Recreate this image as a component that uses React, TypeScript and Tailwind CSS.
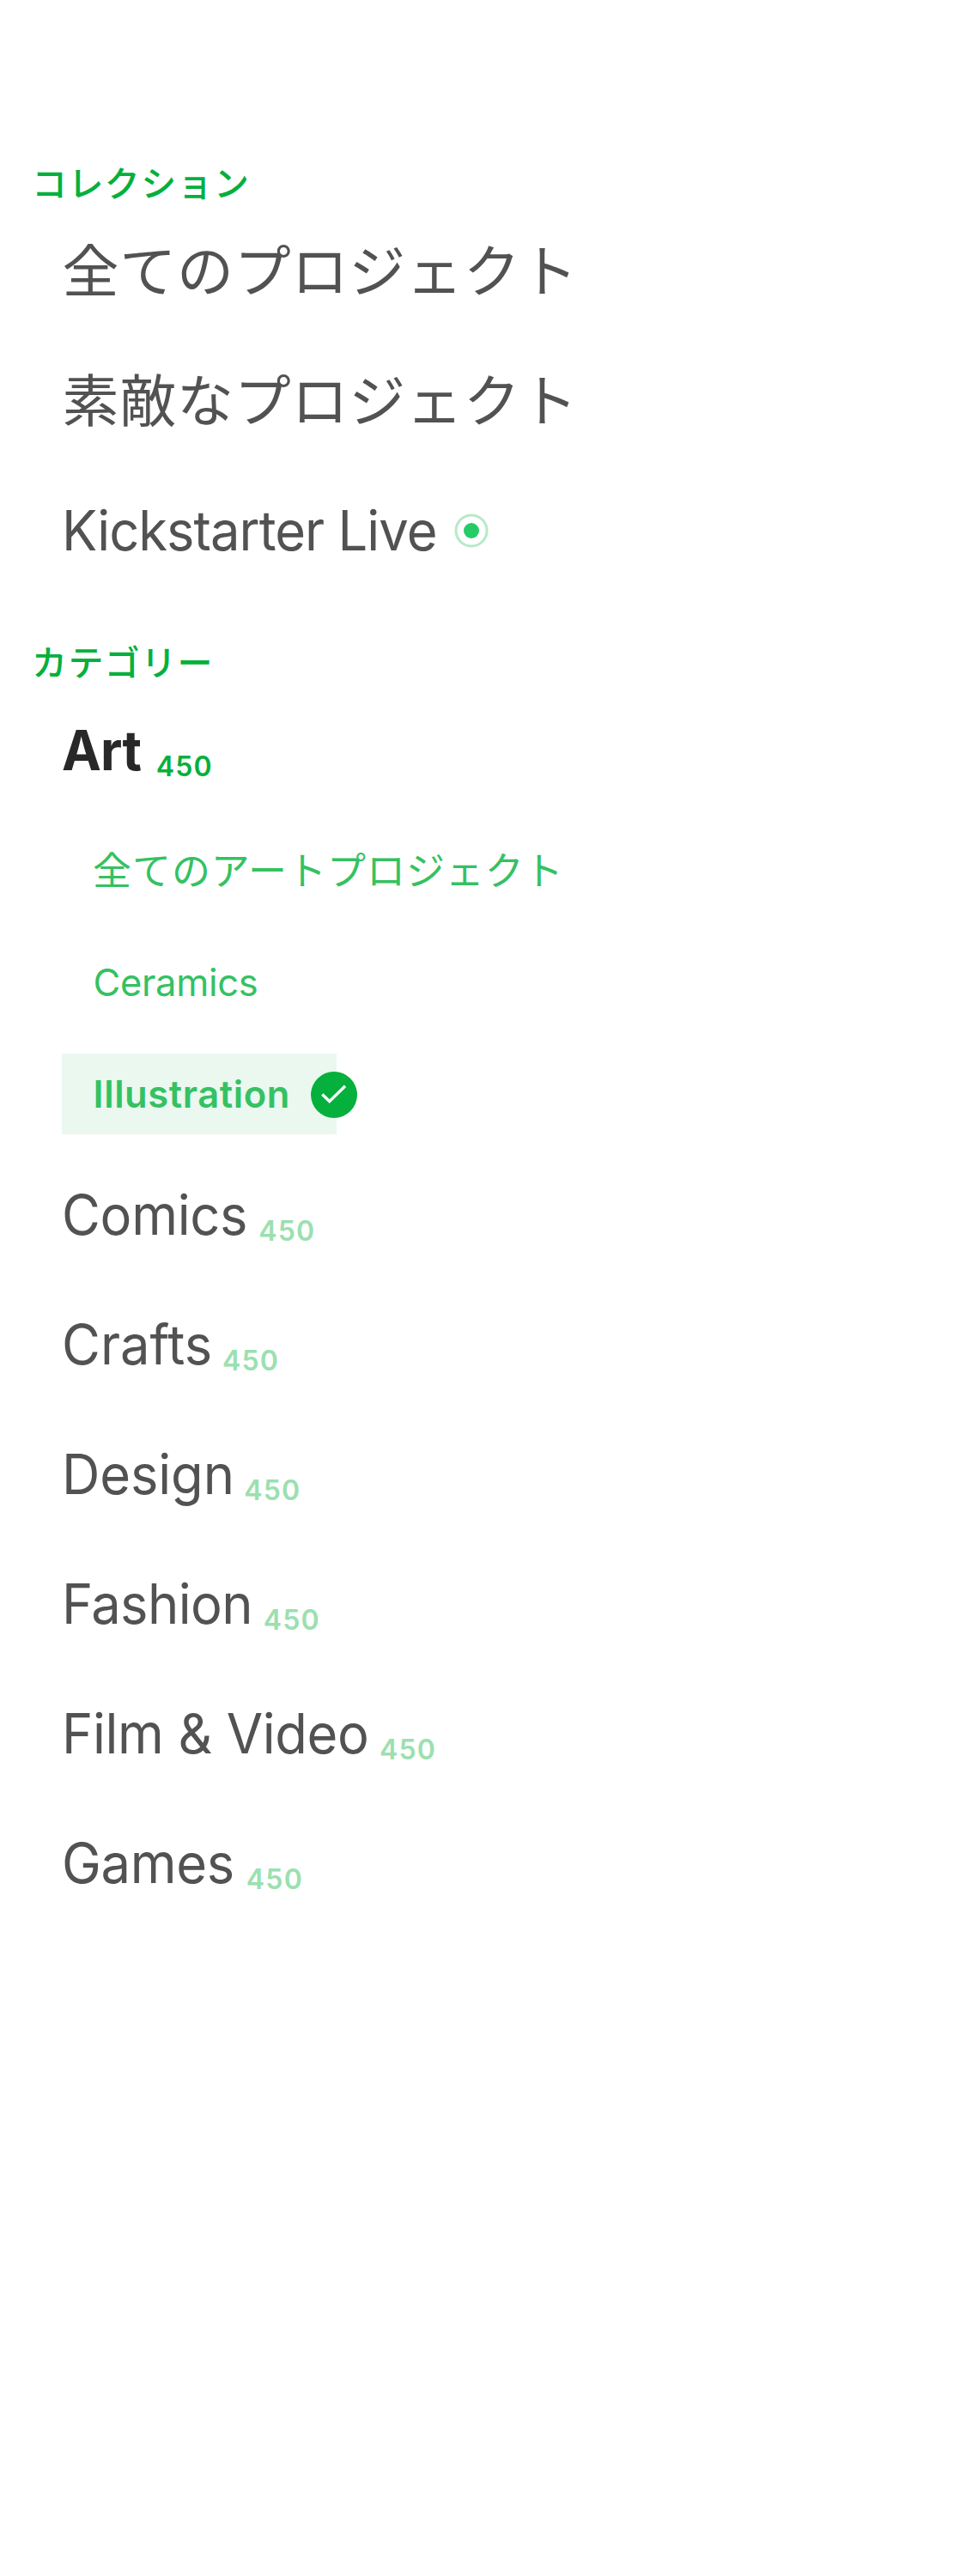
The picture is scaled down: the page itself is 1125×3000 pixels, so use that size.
import React from "react";

const categories = [
  { name: "Comics", style: "mr-[4.5px] tracking-[-0.3px]" },
  { name: "Crafts", style: "mr-[5px] tracking-[0px]" },
  { name: "Design", style: "mr-[3.5px] tracking-[-0.1px]" },
  { name: "Fashion", style: "mr-[4px] tracking-[-0.6px]" },
  { name: "Film & Video", style: "mr-[-2px] tracking-[-0.34px]" },
  { name: "Games", style: "mr-[6px] tracking-[-0.3px]" },
];

function Heading({ children, className = "" }: { children: React.ReactNode; className?: string }) {
  return (
    <h2 className={`-mb-1 whitespace-nowrap pl-[37px] font-['Noto_Sans_CJK_JP',sans-serif] text-[41px] font-medium leading-[57px] tracking-[1.4px] text-[#05b03c] ${className}`}>
      {children}
    </h2>
  );
}

function Name({ children, className }: { children: React.ReactNode; className: string }) {
  return <span className={`inline-block origin-left scale-x-96 ${className}`}>{children}</span>;
}

function Count({ className }: { className: string }) {
  return (
    <span className={`align-[-7px] text-[32px] font-semibold leading-none tracking-[1.2px] ${className}`}>450</span>
  );
}

function LiveIcon() {
  return (
    <svg className="ml-[3px] inline-block size-10 align-[3px]" viewBox="0 0 40 40" aria-hidden="true">
      <circle cx="20" cy="20" r="18" fill="none" stroke="#b6e9c8" strokeWidth="3" />
      <circle cx="20" cy="20" r="9" fill="#26cb68" />
    </svg>
  );
}

function CheckIcon() {
  return (
    <svg className="absolute -right-6 top-[21px] size-[54px]" viewBox="0 0 54 54" aria-hidden="true">
      <circle cx="27" cy="27" r="27" fill="#05b03c" />
      <path d="M13.3 26.6 L21.7 34.6 L40 16.8" fill="none" stroke="#fff" strokeWidth="3.4" />
    </svg>
  );
}

export default function App() {
  return (
    <main className="h-[3000px] w-[1125px] overflow-hidden bg-white pt-[183px] font-['Inter','Noto_Sans_CJK_JP',sans-serif]">
      <Heading>コレクション</Heading>
      <ul className="whitespace-nowrap text-[#525252]">
        {["全てのプロジェクト", "素敵なプロジェクト"].map((name) => (
          <li key={name} className="pl-[72.5px] font-['Noto_Sans_CJK_JP',sans-serif] text-[66px] leading-[151px] tracking-[0.75px]">
            {name}
          </li>
        ))}
        <li className="mt-1 h-[151px] pl-[71.5px] text-[64px] leading-[151px]">
          <Name className="tracking-[-1px]">Kickstarter Live</Name>
          <LiveIcon />
        </li>
      </ul>

      <Heading className="mt-12">カテゴリー</Heading>
      <ul className="mt-1 whitespace-nowrap text-[64px] leading-[151px] text-[#525252]">
        <li>
          <div className="h-[151px] pl-[72px]">
            <Name className="mr-[13.5px] font-bold tracking-[-0.8px] text-[#282828]">Art</Name>
            <Count className="text-[#05b03c]" />
          </div>
          <ul className="my-[18px] ml-[72px] flex w-[320px] flex-col gap-9 text-[43.5px] leading-[94px] text-[#35c162]">
            <li className="-mt-0.5 mb-0.5 h-[94px] pl-9 font-['Noto_Sans_CJK_JP',sans-serif] text-[45px] tracking-[0.95px]">全てのアートプロジェクト</li>
            <li className="h-[94px] pl-[36.5px] tracking-[-0.3px]">Ceramics</li>
            <li className="relative h-[94px] bg-[#eaf8f0] pl-[36.5px] font-semibold tracking-[0.6px]">
              Illustration
              <CheckIcon />
            </li>
          </ul>
        </li>
        {categories.map(({ name, style }) => (
          <li key={name} className="h-[151px] pl-[71.5px]">
            <Name className={style}>{name}</Name>
            <Count className="text-[#9be0b0]" />
          </li>
        ))}
      </ul>
    </main>
  );
}
